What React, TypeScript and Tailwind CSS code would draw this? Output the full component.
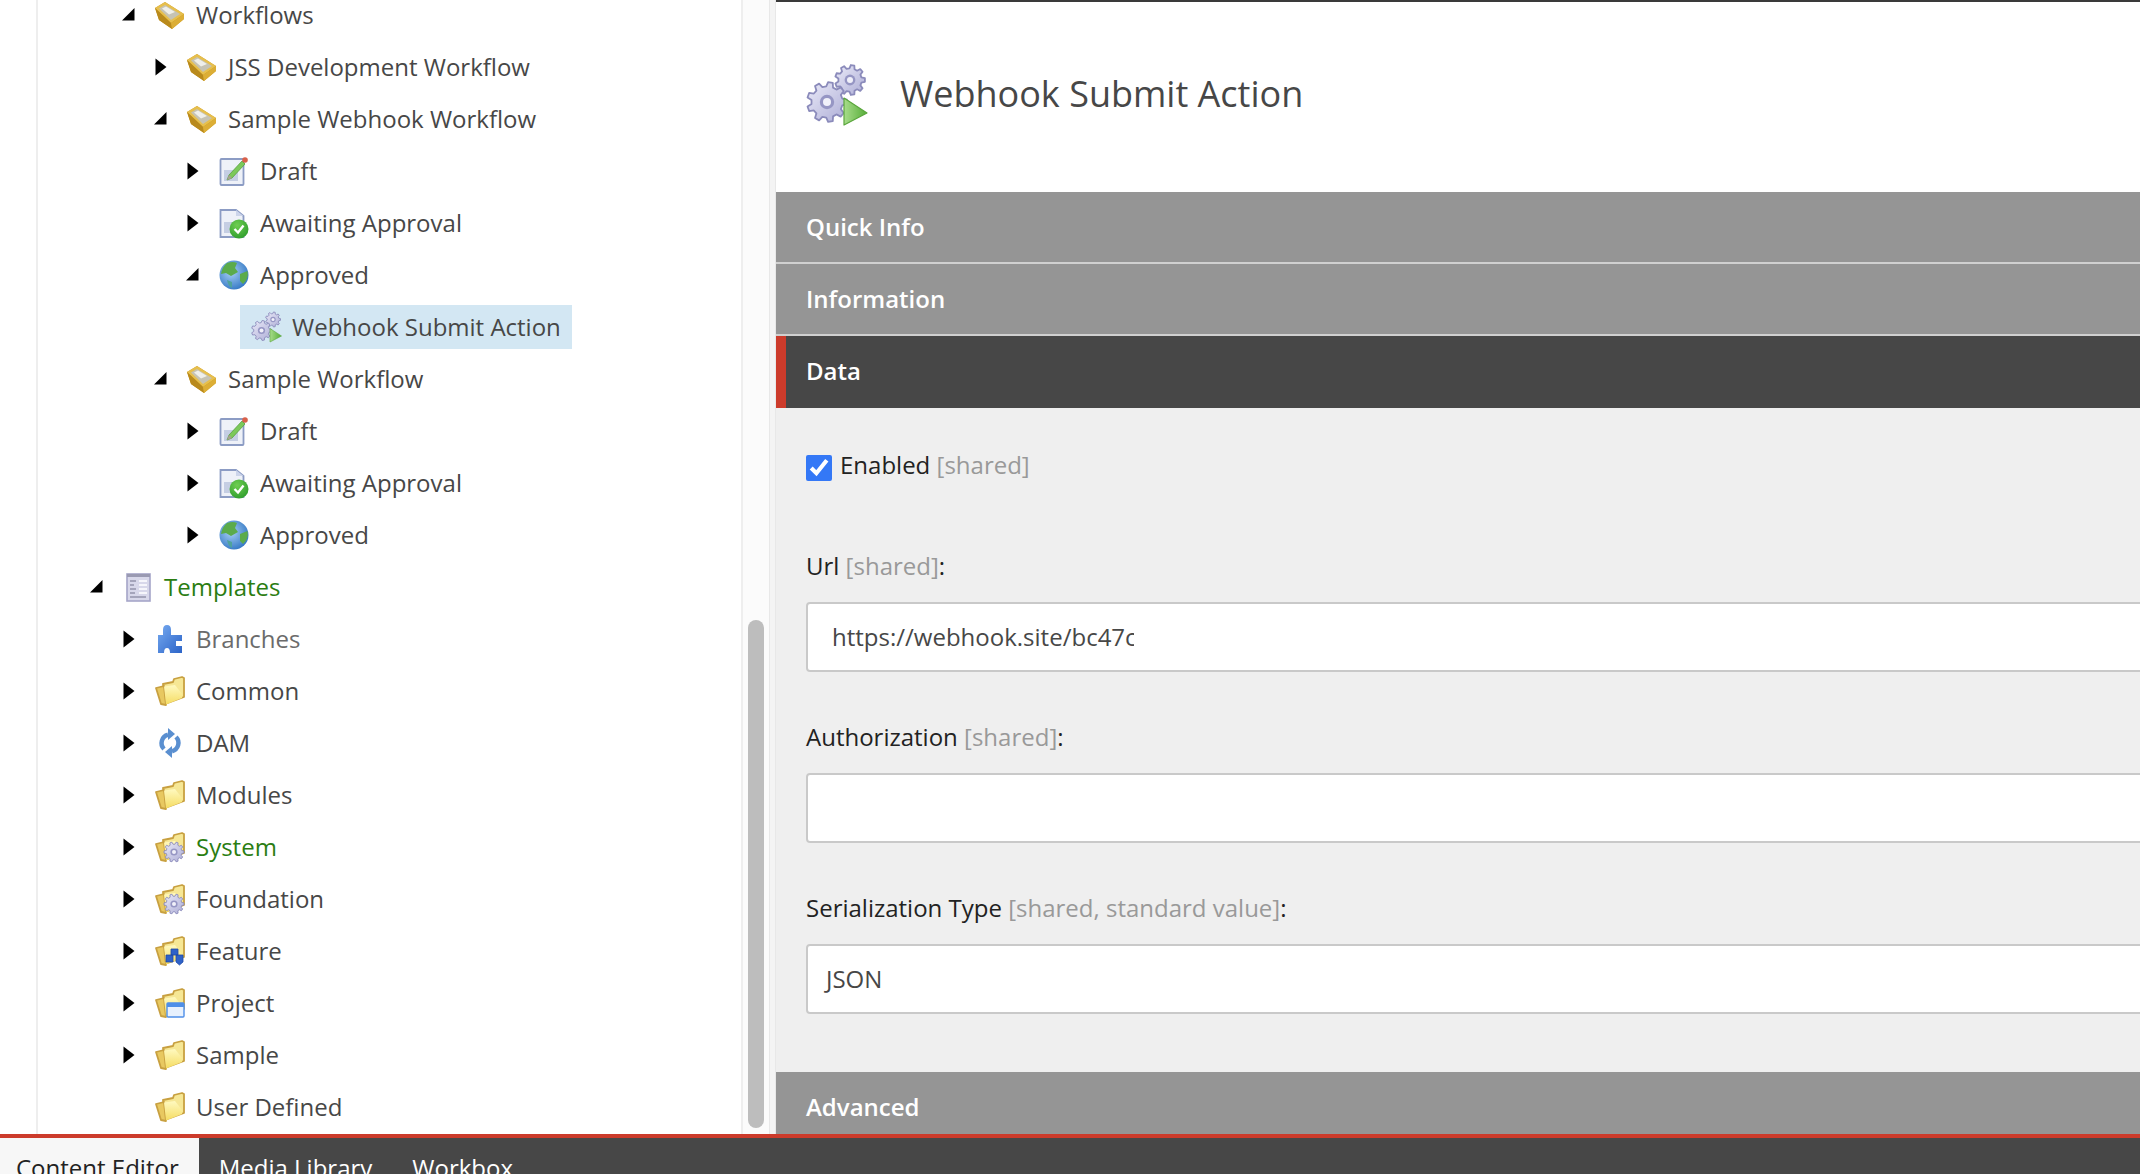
import type { ReactNode } from 'react';

function gearPath(cx: number, cy: number, r: number, teeth: number) {
  const inner = r * 0.78;
  const pts: string[] = [];
  const step = (Math.PI * 2) / teeth;
  for (let i = 0; i < teeth; i++) {
    const a = i * step;
    const offsets: [number, number][] = [
      [-0.32, inner],
      [-0.17, r],
      [0.17, r],
      [0.32, inner],
    ];
    for (const [o, rad] of offsets) {
      const x = cx + Math.cos(a + o * step) * rad;
      const y = cy + Math.sin(a + o * step) * rad;
      pts.push(`${x.toFixed(2)} ${y.toFixed(2)}`);
    }
  }
  return `M${pts.join('L')}Z`;
}

function Gear({ cx, cy, r, teeth = 9 }: { cx: number; cy: number; r: number; teeth?: number }) {
  return (
    <g>
      <path d={gearPath(cx, cy, r, teeth)} fill="url(#gearFill)" stroke="#8b8bbb" strokeWidth="0.9" strokeLinejoin="round" />
      <circle cx={cx} cy={cy} r={r * 0.36} fill="#9696c4" />
      <circle cx={cx} cy={cy} r={r * 0.2} fill="#f1f1fa" />
    </g>
  );
}

function Icon({ size = 32, blur = true, children }: { size?: number; blur?: boolean; children: ReactNode }) {
  return (
    <svg width={size} height={size} viewBox="0 0 32 32" className={blur ? 'shrink-0 blur-[0.6px]' : 'shrink-0 blur-[0.7px]'}>
      {children}
    </svg>
  );
}

const WorkflowIcon = () => (
  <Icon>
    <path d="M1 9 L11 3 L30 15 L30 20 L18 30 L5 21 Z" fill="#c9971f" />
    <path d="M1 9 L11 3 L30 15 L17 24 Z" fill="#e6bf4e" />
    <path d="M5 9.5 L11 6 L26 15 L17 21 Z" fill="#c6c3b4" />
    <path d="M8 9.5 L12 7.5 L21 13 L15 15.5 Z" fill="#efefea" />
    <path d="M1 9 L17 24 L18 30 L5 21 Z" fill="#b98a1c" />
    <path d="M17 24 L30 15 L30 20 L18 30 Z" fill="#dcae36" />
  </Icon>
);

const DraftIcon = () => (
  <Icon>
    <rect x="2.5" y="4" width="23" height="26" rx="1" fill="#eef1f8" stroke="#8c9cc4" strokeWidth="1.8" />
    <path d="M6 15 H20 V26 H6 Z" fill="#c5cee3" />
    <path d="M9 25 L11 20 L24 6 L27 9 L14 23 Z" fill="#7cc95a" stroke="#4f9a35" strokeWidth="0.7" />
    <path d="M9 25 L11 20 L14 23 Z" fill="#a9a08f" />
    <circle cx="27" cy="5" r="2.8" fill="#d9604a" />
  </Icon>
);

const AwaitingIcon = () => (
  <Icon>
    <path d="M2.5 3 H18 L25.5 9 V30 H2.5 Z" fill="#eef1f8" stroke="#8c9cc4" strokeWidth="1.8" />
    <path d="M6 15 H16 V26 H6 Z" fill="#c5cee3" />
    <path d="M18 3 V9 H25.5 Z" fill="#ccd5ea" />
    <circle cx="21" cy="22" r="9.5" fill="url(#greenBall)" />
    <path d="M16.5 22 L20 25.5 L25.5 18.5" fill="none" stroke="#fff" strokeWidth="2.4" />
  </Icon>
);

const GlobeIcon = () => (
  <Icon>
    <circle cx="16" cy="16" r="14.5" fill="url(#globeFill)" />
    <path d="M9 4 Q15 2 19 4 L17 9 L20 13 L13 17 L8 14 L3 15 Q4 8 9 4 Z" fill="#5bab4a" />
    <path d="M22 15 L29.5 12 Q31 20 25 25 L22 22 Z" fill="#5bab4a" />
    <path d="M9 21 L14 23 L14 29 Q10 27 9 21 Z" fill="#4fa39a" />
  </Icon>
);

const ActionIcon = ({ size = 32 }: { size?: number }) => (
  <Icon size={size} blur={size === 32}>
    <Gear cx={23} cy={8.5} r={7.5} />
    <Gear cx={11.5} cy={19.5} r={10} />
    <path d="M20 17.5 L31.5 25 L20 31 Z" fill="url(#playFill)" stroke="#5aa63c" strokeWidth="0.6" strokeLinejoin="round" />
  </Icon>
);

const TemplatesIcon = () => (
  <Icon>
    <rect x="5" y="3" width="23" height="27" fill="#d8d8ea" stroke="#a5a5c8" strokeWidth="1.6" />
    <path d="M5 3 H28 V6 H5 Z" fill="#9a9ab2" />
    <path d="M8 10 H14 M8 14 H12 M8 18 H14 M8 22 H13 M8 26 H24" stroke="#9494ac" strokeWidth="1.6" />
    <path d="M17 10 H25 M17 14 H25 M17 18 H25 M17 22 H25" stroke="#f6f6fb" strokeWidth="2" />
  </Icon>
);

const PuzzleIcon = () => (
  <Icon>
    <path
      d="M4 12 H9 V7 Q9 2 13 2 Q17 2 17 7 V12 H28 V18 H22 V23 H28 V30 H16 Q16 25 13 25 Q10 25 10 30 H4 Z"
      fill="url(#puzzleFill)"
    />
  </Icon>
);

const SyncIcon = () => (
  <Icon>
    <path d="M10 22 A8.5 8.5 0 0 1 14 7.8" fill="none" stroke="#5a8fd0" strokeWidth="4.5" />
    <path d="M14 1 L21 7 L14 13 Z" fill="#5a8fd0" />
    <path d="M22 10 A8.5 8.5 0 0 1 18 24.2" fill="none" stroke="#5a8fd0" strokeWidth="4.5" />
    <path d="M18 19 L11 25 L18 31 Z" fill="#5a8fd0" />
  </Icon>
);

const FolderShape = () => (
  <>
    <path
      d="M9 9 L19 7 L20 4 L28 2 L30 3 L30 22 L11 29 Z"
      fill="#f6e795"
      stroke="#c8a040"
      strokeWidth="1.8"
      strokeLinejoin="round"
    />
    <path d="M2 13 L10 11 L12 30 L7 29 Z" fill="#e8c860" stroke="#c8a040" strokeWidth="1.8" strokeLinejoin="round" />
    <path d="M10 11.5 L21 10 L28 19 L28 23 L12 29.5 Z" fill="url(#folderFill)" />
  </>
);

const FolderIcon = () => (
  <Icon>
    <FolderShape />
  </Icon>
);

const GearFolderIcon = () => (
  <Icon>
    <FolderShape />
    <Gear cx={20} cy={21} r={10} teeth={10} />
  </Icon>
);

const FeatureFolderIcon = () => (
  <Icon>
    <FolderShape />
    <path d="M17 14 H24 V20 H17 Z M12 20 H19 V27 H12 Z M22 20 H29 V27 L25.5 30 L22 27 Z" fill="#2f62c8" stroke="#1f4aa4" strokeWidth="0.8" />
  </Icon>
);

const ProjectFolderIcon = () => (
  <Icon>
    <FolderShape />
    <rect x="13" y="16" width="17" height="14" rx="1" fill="#e8f1fd" stroke="#4f8fe8" strokeWidth="1.4" />
    <rect x="13" y="16" width="17" height="4" fill="#4f8fe8" />
  </Icon>
);

function Toggle({ state }: { state?: 'open' | 'closed' }) {
  if (!state) return <span className="w-[22px] shrink-0" />;
  return (
    <svg width="22" height="24" viewBox="0 0 22 24" className="shrink-0 blur-[0.3px]">
      {state === 'closed' ? <path d="M1.5 3.5 L12.5 12 L1.5 20.5 Z" fill="#000" /> : <path d="M0 17.5 L12.5 17.5 L12.5 5 Z" fill="#000" />}
    </svg>
  );
}

type Node = {
  label: string;
  level: number;
  icon: ReactNode;
  state?: 'open' | 'closed';
  tone?: string;
  selected?: boolean;
};

const nodes: Node[] = [
  { label: 'Workflows', level: 1, icon: <WorkflowIcon />, state: 'open' },
  { label: 'JSS Development Workflow', level: 2, icon: <WorkflowIcon />, state: 'closed' },
  { label: 'Sample Webhook Workflow', level: 2, icon: <WorkflowIcon />, state: 'open' },
  { label: 'Draft', level: 3, icon: <DraftIcon />, state: 'closed' },
  { label: 'Awaiting Approval', level: 3, icon: <AwaitingIcon />, state: 'closed' },
  { label: 'Approved', level: 3, icon: <GlobeIcon />, state: 'open' },
  { label: 'Webhook Submit Action', level: 4, icon: <ActionIcon />, selected: true },
  { label: 'Sample Workflow', level: 2, icon: <WorkflowIcon />, state: 'open' },
  { label: 'Draft', level: 3, icon: <DraftIcon />, state: 'closed' },
  { label: 'Awaiting Approval', level: 3, icon: <AwaitingIcon />, state: 'closed' },
  { label: 'Approved', level: 3, icon: <GlobeIcon />, state: 'closed' },
  { label: 'Templates', level: 0, icon: <TemplatesIcon />, state: 'open', tone: 'text-[#2b7d12]' },
  { label: 'Branches', level: 1, icon: <PuzzleIcon />, state: 'closed', tone: 'text-[#6b6b6b]' },
  { label: 'Common', level: 1, icon: <FolderIcon />, state: 'closed' },
  { label: 'DAM', level: 1, icon: <SyncIcon />, state: 'closed' },
  { label: 'Modules', level: 1, icon: <FolderIcon />, state: 'closed' },
  { label: 'System', level: 1, icon: <GearFolderIcon />, state: 'closed', tone: 'text-[#2b7d12]' },
  { label: 'Foundation', level: 1, icon: <GearFolderIcon />, state: 'closed' },
  { label: 'Feature', level: 1, icon: <FeatureFolderIcon />, state: 'closed' },
  { label: 'Project', level: 1, icon: <ProjectFolderIcon />, state: 'closed' },
  { label: 'Sample', level: 1, icon: <FolderIcon />, state: 'closed' },
  { label: 'User Defined', level: 1, icon: <FolderIcon /> },
];

function TreeRow({ node }: { node: Node }) {
  return (
    <div className="flex h-[52px] shrink-0 items-center" style={{ paddingLeft: 52 + 32 * node.level }}>
      <Toggle state={node.state} />
      <div className={`flex h-11 items-center pl-[10px] pr-[11px] ${node.selected ? 'bg-[#d3e7f3]' : ''}`}>
        {node.icon}
        <span className={`ml-[10px] whitespace-nowrap ${node.tone ?? 'text-[#474747]'}`}>{node.label}</span>
      </div>
    </div>
  );
}

function SectionBar({ label }: { label: string }) {
  return (
    <div className="flex h-[70px] shrink-0 items-center bg-[#959595] pl-[30px] font-semibold text-white">{label}</div>
  );
}

function FieldLabel({ name, note, className }: { name: string; note: string; className: string }) {
  return (
    <div className={`h-[34px] leading-[34px] text-[#222] ${className}`}>
      {name} <span className="text-[#999]">[{note}]</span>:
    </div>
  );
}

function FieldBox({ className, children }: { className: string; children?: ReactNode }) {
  return (
    <div className={`-mr-2 flex h-[70px] items-center rounded-[4px] border-2 border-[#c9c9c9] bg-white text-[#474747] ${className}`}>
      {children}
    </div>
  );
}

export default function App() {
  return (
    <div className="flex h-[1174px] w-[2140px] flex-col overflow-hidden bg-white font-['Open_Sans',sans-serif] text-[24px]">
      <svg className="block h-0 w-0">
        <defs>
          <linearGradient id="gearFill" x1="0" y1="0" x2="1" y2="1">
            <stop offset="0" stopColor="#eaeaf8" />
            <stop offset="1" stopColor="#adadd6" />
          </linearGradient>
          <linearGradient id="playFill" x1="0" y1="0" x2="1" y2="0">
            <stop offset="0" stopColor="#a7dc8a" />
            <stop offset="1" stopColor="#56ad38" />
          </linearGradient>
          <linearGradient id="folderFill" x1="0" y1="0" x2="0" y2="1">
            <stop offset="0" stopColor="#fff9c0" />
            <stop offset="1" stopColor="#f5dc62" />
          </linearGradient>
          <linearGradient id="puzzleFill" x1="0" y1="0" x2="1" y2="1">
            <stop offset="0" stopColor="#76aaf0" />
            <stop offset="1" stopColor="#2c64c8" />
          </linearGradient>
          <radialGradient id="globeFill" cx="0.4" cy="0.4" r="0.7">
            <stop offset="0" stopColor="#a8d0f4" />
            <stop offset="1" stopColor="#2a70c0" />
          </radialGradient>
          <radialGradient id="greenBall" cx="0.4" cy="0.3" r="0.8">
            <stop offset="0" stopColor="#6fce52" />
            <stop offset="1" stopColor="#2a9a2a" />
          </radialGradient>
        </defs>
      </svg>

      <div className="flex min-h-0 flex-1">
        <div className="flex w-[776px] shrink-0 bg-white">
          <div className="ml-9 min-w-0 flex-1 overflow-hidden border-x-2 border-[#eeeeee]">
            <div className="-mt-[11px] flex flex-col">
              {nodes.map((node, i) => (
                <TreeRow key={i} node={node} />
              ))}
            </div>
          </div>
          <div className="flex w-[26px] shrink-0 flex-col bg-[#fbfbfb] px-[5px] pb-[6px] pt-[620px]">
            <div className="flex-1 rounded-lg bg-[#bdbdbd]" />
          </div>
          <div className="w-[7px] shrink-0 border-x border-[#e8e8e8] bg-[#f4f4f4]" />
        </div>

        <div className="flex min-w-0 flex-1 flex-col">
          <div className="h-[2px] shrink-0 bg-[#3a3a3a]" />
          <div className="flex h-[190px] shrink-0 items-center bg-white pb-1 pl-[28px]">
            <ActionIcon size={64} />
            <h1 className="-mt-[2px] ml-[32px] text-[36px] text-[#474747]">Webhook Submit Action</h1>
          </div>
          <SectionBar label="Quick Info" />
          <div className="h-[2px] shrink-0 bg-[#d0d0d0]" />
          <SectionBar label="Information" />
          <div className="h-[2px] shrink-0 bg-[#d0d0d0]" />
          <div className="flex h-[72px] shrink-0 items-center border-l-[10px] border-[#cc3b2b] bg-[#474747] pb-[2px] pl-[20px] font-semibold text-white">
            Data
          </div>
          <div className="flex min-h-0 flex-1 flex-col bg-[#efefef] pl-[30px]">
            <div className="mt-[47px] flex h-[26px] items-center">
              <input type="checkbox" defaultChecked readOnly className="m-0 h-[26px] w-[26px] accent-[#3478f6]" />
              <span className="-mt-[6px] ml-2 text-[#222]">
                Enabled <span className="text-[#999]">[shared]</span>
              </span>
            </div>
            <FieldLabel name="Url" note="shared" className="mt-[68px]" />
            <FieldBox className="mt-[19px] pl-[24px]">
              <div className="w-[302px] overflow-hidden whitespace-nowrap">https://webhook.site/bc47c</div>
            </FieldBox>
            <FieldLabel name="Authorization" note="shared" className="mt-[48px]" />
            <FieldBox className="mt-[19px]" />
            <FieldLabel name="Serialization Type" note="shared, standard value" className="mt-[48px]" />
            <FieldBox className="mt-[19px] pl-[18px]">JSON</FieldBox>
          </div>
          <div className="h-[62px] shrink-0 overflow-hidden bg-[#959595] pl-[30px] font-semibold leading-[70px] text-white">
            Advanced
          </div>
        </div>
      </div>

      <div className="h-1 shrink-0 bg-[#cc3b2b]" />
      <div className="flex h-9 shrink-0 overflow-hidden bg-[#474747] text-white">
        <div className="bg-[#f7f7f7] pl-[16px] pr-[20px] pt-[12px] leading-9 text-[#222]">Content Editor</div>
        <div className="px-5 pt-[12px] leading-9">Media Library</div>
        <div className="px-5 pt-[12px] leading-9">Workbox</div>
      </div>
    </div>
  );
}
